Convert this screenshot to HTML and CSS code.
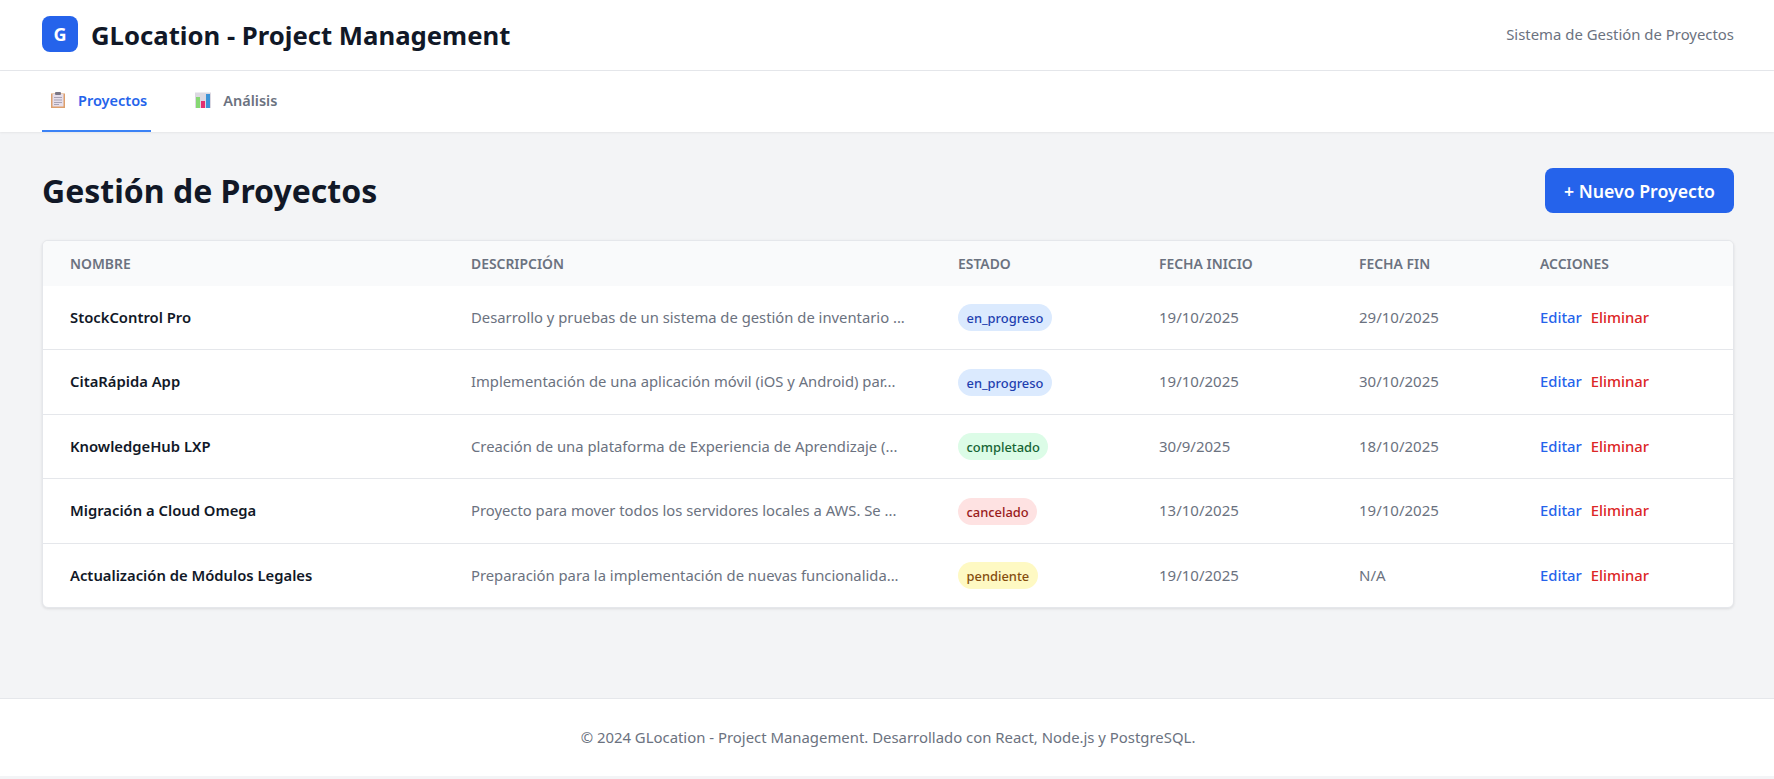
FILE: index.html
```html
<!DOCTYPE html>
<html>
<head>
    <title>GLocation - Project Management</title>
    <link rel="stylesheet" href="styles.css">
</head>
<body>
    <header class="topbar">
        <div class="brand">
            <div class="brand-mark">G</div>
            <h1>GLocation - Project Management</h1>
        </div>
        <span class="tagline">Sistema de Gestión de Proyectos</span>
    </header>

    <nav class="tabs">
        <a class="tab active" href="#">
            <svg class="tab-icon" viewBox="0 0 16 16">
                <rect x="1" y="1.5" width="14" height="14.5" fill="#dd9f6c"/>
                <rect x="2.5" y="2" width="11" height="12.5" fill="#e6deea"/>
                <rect x="5" y="0" width="6" height="3" rx="1" fill="#7b7785"/>
                <path d="M4 5.5h8M4 8h8M4 10.5h8M4 12.5h5" stroke="#a8a3b4" stroke-width="1.2"/>
            </svg>
            Proyectos
        </a>
        <a class="tab" href="#">
            <svg class="tab-icon" viewBox="0 0 16 16">
                <rect x="0" y="0.5" width="16" height="15.5" fill="#dcd9e2"/>
                <rect x="1" y="5" width="4" height="11" fill="#86d873"/>
                <rect x="6" y="9" width="4" height="7" fill="#e2306f"/>
                <rect x="11" y="2" width="4" height="14" fill="#3d93d6"/>
            </svg>
            Análisis
        </a>
    </nav>

    <main class="content">
        <div class="page-head">
            <h2>Gestión de Proyectos</h2>
            <button class="btn-new">+ Nuevo Proyecto</button>
        </div>

        <div class="table-card">
            <table>
                <colgroup>
                    <col class="col-name"><col class="col-desc"><col class="col-state"><col class="col-date"><col class="col-end"><col>
                </colgroup>
                <thead>
                    <tr>
                        <th>Nombre</th>
                        <th>Descripción</th>
                        <th>Estado</th>
                        <th>Fecha Inicio</th>
                        <th>Fecha Fin</th>
                        <th>Acciones</th>
                    </tr>
                </thead>
                <tbody>
                    <tr>
                        <td class="name">StockControl Pro</td>
                        <td class="desc">Desarrollo y pruebas de un sistema de gestión de inventario ...</td>
                        <td><span class="badge progress">en_progreso</span></td>
                        <td>19/10/2025</td>
                        <td>29/10/2025</td>
                        <td><a class="link edit" href="#">Editar</a><a class="link del" href="#">Eliminar</a></td>
                    </tr>
                    <tr>
                        <td class="name">CitaRápida App</td>
                        <td class="desc">Implementación de una aplicación móvil (iOS y Android) par...</td>
                        <td><span class="badge progress">en_progreso</span></td>
                        <td>19/10/2025</td>
                        <td>30/10/2025</td>
                        <td><a class="link edit" href="#">Editar</a><a class="link del" href="#">Eliminar</a></td>
                    </tr>
                    <tr>
                        <td class="name">KnowledgeHub LXP</td>
                        <td class="desc">Creación de una plataforma de Experiencia de Aprendizaje (...</td>
                        <td><span class="badge done">completado</span></td>
                        <td>30/9/2025</td>
                        <td>18/10/2025</td>
                        <td><a class="link edit" href="#">Editar</a><a class="link del" href="#">Eliminar</a></td>
                    </tr>
                    <tr>
                        <td class="name">Migración a Cloud Omega</td>
                        <td class="desc">Proyecto para mover todos los servidores locales a AWS. Se ...</td>
                        <td><span class="badge cancelled">cancelado</span></td>
                        <td>13/10/2025</td>
                        <td>19/10/2025</td>
                        <td><a class="link edit" href="#">Editar</a><a class="link del" href="#">Eliminar</a></td>
                    </tr>
                    <tr>
                        <td class="name">Actualización de Módulos Legales</td>
                        <td class="desc">Preparación para la implementación de nuevas funcionalida...</td>
                        <td><span class="badge pending">pendiente</span></td>
                        <td>19/10/2025</td>
                        <td>N/A</td>
                        <td><a class="link edit" href="#">Editar</a><a class="link del" href="#">Eliminar</a></td>
                    </tr>
                </tbody>
            </table>
        </div>
    </main>

    <footer class="footer">© 2024 GLocation - Project Management. Desarrollado con React, Node.js y PostgreSQL.</footer>
</body>
</html>
```

FILE: styles.css
```css
* {
    box-sizing: border-box;
}
body {
    margin: 0;
    background: #f3f4f6;
    color: #111827;
    font-family: "Noto Sans", "Open Sans", sans-serif;
}
h1, h2 {
    margin: 0;
}

.topbar {
    height: 71px;
    padding: 0 40px 2px 42px;
    display: flex;
    align-items: center;
    justify-content: space-between;
    background: #fff;
    border-bottom: 1px solid #e5e7eb;
}
.brand {
    display: flex;
    align-items: center;
    gap: 13px;
}
.brand-mark {
    width: 36px;
    height: 36px;
    border-radius: 8px;
    background: #2563eb;
    color: #fff;
    font-size: 18px;
    font-weight: 700;
    display: flex;
    align-items: center;
    justify-content: center;
}
.brand h1 {
    padding-top: 2px;
    font-size: 25.7px;
    font-weight: 700;
}
.tagline {
    font-size: 14.9px;
    color: #6b7280;
}

.tabs {
    height: 61px;
    padding: 0 42px;
    display: flex;
    gap: 36px;
    background: #fff;
    box-shadow: 0 1px 2px rgba(0, 0, 0, 0.06);
}
.tab {
    display: flex;
    align-items: center;
    gap: 12px;
    padding: 0 4px 2px 8px;
    font-size: 14.5px;
    font-weight: 600;
    color: #6b7280;
    text-decoration: none;
    border-bottom: 2px solid transparent;
}
.tab.active {
    color: #2563eb;
    border-bottom-color: #3b82f6;
}
.tab-icon {
    width: 16px;
    height: 16px;
}

.content {
    padding: 36px 40px 0 42px;
    height: 566px;
}
.page-head {
    display: flex;
    align-items: center;
    justify-content: space-between;
    margin-bottom: 27px;
}
.page-head h2 {
    font-size: 32px;
    font-weight: 700;
}
.btn-new {
    height: 45px;
    padding: 0 19px;
    border: none;
    border-radius: 8px;
    background: #2563eb;
    color: #fff;
    font-family: inherit;
    font-size: 17.7px;
    font-weight: 600;
}

.table-card {
    background: #fff;
    border: 1px solid #e5e7eb;
    border-radius: 6px;
    box-shadow: 0 1px 3px rgba(0, 0, 0, 0.1);
    overflow: hidden;
}
table {
    width: 100%;
    border-collapse: separate;
    border-spacing: 0;
    table-layout: fixed;
}
.col-name {
    width: 401px;
}
.col-desc {
    width: 487px;
}
.col-state {
    width: 201px;
}
.col-date {
    width: 200px;
}
.col-end {
    width: 181px;
}
th {
    height: 45px;
    padding: 0 27px;
    background: #f9fafb;
    font-size: 13.9px;
    font-weight: 600;
    text-align: left;
    text-transform: uppercase;
    color: #6b7280;
}
td {
    height: 64px;
    padding: 0 27px 2px;
    font-size: 15px;
    color: #6b7280;
    border-bottom: 1px solid #e5e7eb;
    white-space: nowrap;
}
tbody tr:nth-child(even) td {
    height: 65px;
}
tbody tr:last-child td {
    height: 63px;
    border-bottom: none;
}
td.name {
    font-size: 14.8px;
    font-weight: 600;
    color: #111827;
}
td.desc {
    font-size: 14.8px;
}
.badge {
    display: inline-block;
    margin-top: 2px;
    padding: 5px 8.5px 4px;
    border-radius: 14px;
    font-size: 12.9px;
    font-weight: 500;
}
.progress {
    background: #dbeafe;
    color: #1e40af;
}
.done {
    background: #dcfce7;
    color: #166534;
}
.cancelled {
    background: #fee2e2;
    color: #991b1b;
}
.pending {
    background: #fef9c3;
    color: #854d0e;
}
.link {
    font-size: 14.8px;
    font-weight: 500;
    text-decoration: none;
}
.edit {
    margin-right: 9px;
    color: #2563eb;
}
.del {
    color: #dc2626;
}

.footer {
    height: 78px;
    padding: 0 0 2px 2px;
    display: flex;
    align-items: center;
    justify-content: center;
    background: #fff;
    border-top: 1px solid #e5e7eb;
    font-size: 14.9px;
    color: #6b7280;
}
```
